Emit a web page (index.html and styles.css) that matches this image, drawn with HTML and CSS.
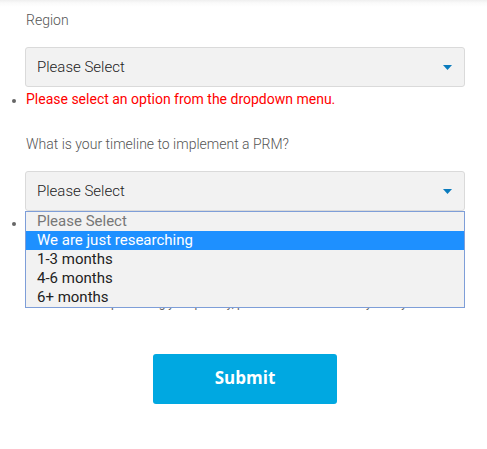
FILE: index.html
```html
<!DOCTYPE html>
<html lang="en">
<head>
<meta charset="utf-8">
<title>Form</title>
<link rel="stylesheet" href="styles.css">
</head>
<body>
<form class="form">
  <div class="field">
    <label class="label">Region</label>
    <div class="select">
      <span class="select-value">Please Select</span>
      <svg class="caret" width="9" height="5" viewBox="0 0 9 5"><path d="M0 0H9L4.5 5Z" fill="#0a7bbd"/></svg>
    </div>
    <ul class="errors"><li>Please select an option from the dropdown menu.</li></ul>
  </div>
  <div class="field field-timeline">
    <label class="label">What is your timeline to implement a PRM?</label>
    <div class="select-wrap">
      <div class="select">
        <span class="select-value">Please Select</span>
        <svg class="caret" width="9" height="5" viewBox="0 0 9 5"><path d="M0 0H9L4.5 5Z" fill="#0a7bbd"/></svg>
      </div>
      <ul class="options">
        <li class="option option-placeholder">Please Select</li>
        <li class="option option-active">We are just researching</li>
        <li class="option">1-3 months</li>
        <li class="option">4-6 months</li>
        <li class="option">6+ months</li>
      </ul>
    </div>
    <ul class="legal"><li>We're committed to your privacy. We use the information you provide<br>to us to contact you about our relevant content, products, and<br>services. You may unsubscribe from these communications at any<br>time. We will never sell or share your information with third<br>parties. For information on how to unsubscribe, as well as our<br>commitment to protecting your privacy, please review our Privacy Policy.</li></ul>
  </div>
  <div class="actions"><button type="button" class="submit">Submit</button></div>
</form>
</body>
</html>
```
FILE: styles.css
```css
html, body {
  margin: 0;
  padding: 0;
  background: #fff;
}
body {
  font-family: Roboto, "Liberation Sans", sans-serif;
  background: linear-gradient(#efefef 0, #fafafa 3px, #fff 7px) no-repeat;
  background-size: 100% 8px;
  background-color: #fff;
}
.form {
  width: 440px;
  padding: 10px 0 0 25px;
}
.field { display: flex; flex-direction: column; }
.label {
  font-size: 14px;
  font-weight: 300;
  line-height: 20px;
  color: #555;
  padding-left: 1px;
}
.select {
  margin-top: 17px;
  height: 40px;
  box-sizing: border-box;
  border: 1px solid #dadada;
  border-radius: 3px;
  background: #f2f2f2;
  display: flex;
  align-items: center;
  justify-content: space-between;
  padding: 0 12px 0 11px;
}
.select-value {
  font-size: 15px;
  font-weight: 300;
  color: #222;
}
.caret { display: block; margin-top: 1px; }
.errors, .legal {
  margin: 2px 0 0;
  padding: 0 0 0 1px;
  list-style: disc;
}
.errors li, .legal li {
  font-size: 14px;
  line-height: 20px;
}
.errors li { color: #ff0000; font-weight: 400; }
.errors li::marker, .legal li::marker { color: #666; font-size: 12px; }
.field-timeline { margin-top: 25px; }
.select-wrap { position: relative; }
.options {
  position: absolute;
  top: 100%;
  left: 0;
  right: 0;
  margin: 0;
  padding: 0;
  list-style: none;
  border: 1px solid #7e9ed8;
  background: #f2f2f2;
  z-index: 2;
}
.option {
  height: 19px;
  line-height: 19px;
  font-size: 15px;
  color: #222;
  padding-left: 11px;
}
.option-placeholder { color: #777; }
.option-active { background: #1e90ff; color: #fff; }
.legal { margin-top: 4px; }
.legal li {
  font-size: 12px;
  line-height: 16px;
  color: #666;
}
.actions {
  display: flex;
  justify-content: center;
  margin-top: 43px;
}
.submit {
  width: 184px;
  height: 50px;
  padding: 0 0 3px;
  border: 0;
  border-radius: 3px;
  background: #00a8e1;
  color: #fff;
  font-family: "Open Sans", sans-serif;
  font-weight: 700;
  font-size: 17px;
}
```
